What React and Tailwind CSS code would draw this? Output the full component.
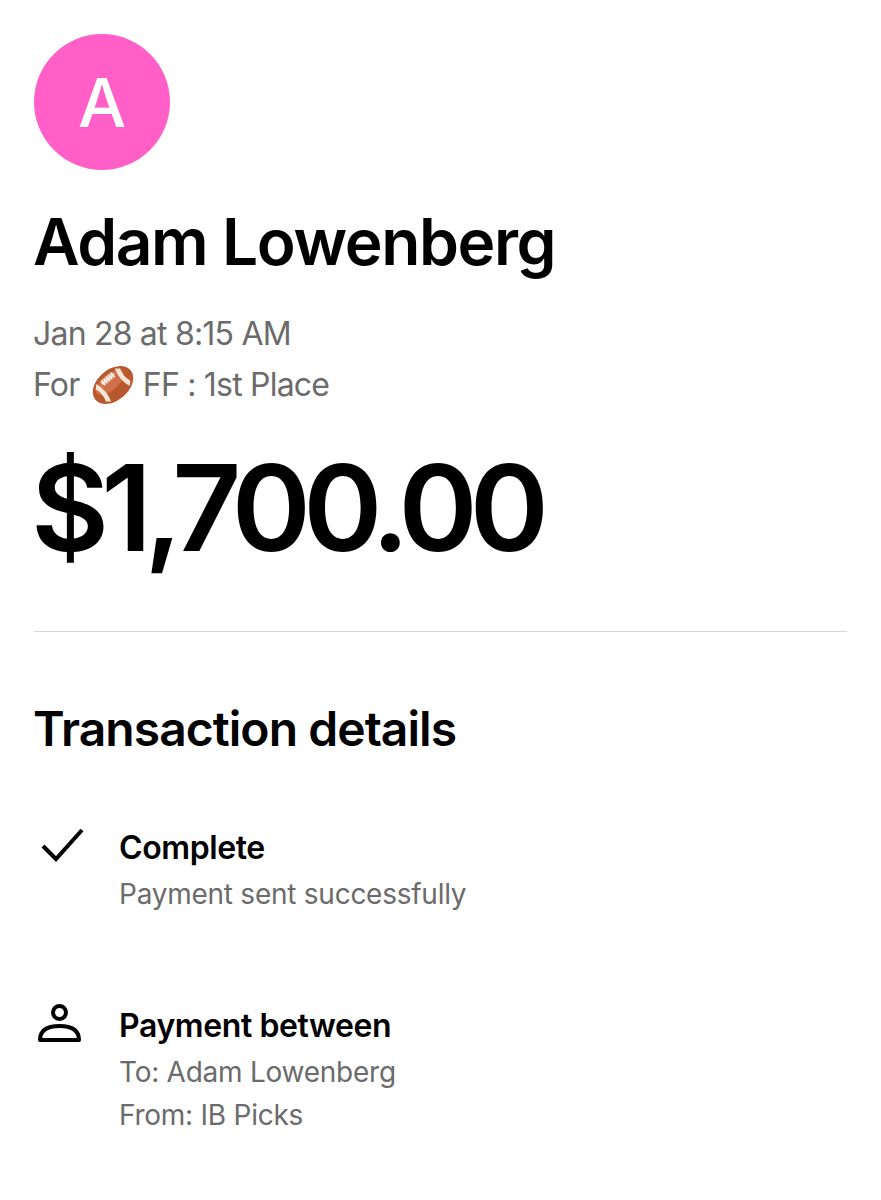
import React from "react";

const Football = () => (
  <svg width="44" height="44" viewBox="0 0 44 44" className="inline-block align-middle -mt-1 ml-[3px]">
    <g transform="rotate(-40 22 22)">
      <ellipse cx="22" cy="22" rx="23" ry="15.5" fill="#b9582f" />
      <ellipse cx="21" cy="18" rx="17" ry="8" fill="#d0704a" />
      <path d="M10 10.5 Q14 22 10 33.5 L6 30 Q9 22 6 14 Z" fill="#f3e6d6" />
      <path d="M34 10.5 Q30 22 34 33.5 L38 30 Q35 22 38 14 Z" fill="#f3e6d6" />
      <path d="M14 14 H30" stroke="#f5ece0" strokeWidth="2" />
      <path d="M16 11V17M19 11V17M22 11V17M25 11V17M28 11V17" stroke="#f5ece0" strokeWidth="2.2" />
    </g>
  </svg>
);

const DetailRow = ({ icon, title, lines, className }) => (
  <div className={`flex ${className}`}>
    <div className="w-[85px] shrink-0">{icon}</div>
    <div>
      <div className="text-[32px] leading-[44px] font-semibold text-black tracking-[-0.4px]">{title}</div>
      <div className="mt-[3px]">
        {lines.map((l) => (
          <div key={l} className="text-[28px] leading-[43px] text-[#6b6b6b] tracking-[-0.25px]">{l}</div>
        ))}
      </div>
    </div>
  </div>
);

export default function App() {
  return (
    <div className="w-[881px] h-[1200px] bg-white overflow-hidden px-[34px] pt-[34px] font-['Inter',sans-serif]">
      <div className="w-[136px] h-[136px] rounded-full bg-[#ff5fc6] flex items-center justify-center text-white text-[68px] font-[550]">
        A
      </div>
      <h1 className="mt-[32px] -ml-[1px] text-[64px] leading-[80px] font-semibold text-black tracking-[-1.4px]">Adam Lowenberg</h1>
      <div className="mt-[26px] -ml-[1px] text-[32px] leading-[51px] text-[#6b6b6b] tracking-[-0.8px]">
        <div>Jan 28 at 8:15 AM</div>
        <div>
          For <Football /> FF : 1st Place
        </div>
      </div>
      <div className="mt-[28px] -ml-[3px] text-[120px] leading-[140px] font-semibold text-black tracking-[-7.75px]">$1,700.00</div>
      <div className="mt-[53px] h-[1px] bg-[#d6d6d6]" />
      <h2 className="mt-[65px] -ml-[1px] text-[48px] leading-[64px] font-semibold text-black tracking-[-0.95px]">Transaction details</h2>
      <DetailRow
        className="mt-[65px]"
        title="Complete"
        lines={["Payment sent successfully"]}
        icon={
          <svg width="54" height="44" viewBox="0 0 54 44" fill="none" className="ml-[4px]">
            <path d="M5 20 L18 33 L44 4" stroke="#000" strokeWidth="4" />
          </svg>
        }
      />
      <DetailRow
        className="mt-[88px]"
        title="Payment between"
        lines={["To: Adam Lowenberg", "From: IB Picks"]}
        icon={
          <svg width="54" height="44" viewBox="0 0 54 44" fill="none" className="ml-[4px]">
            <circle cx="21.5" cy="8.5" r="6.5" stroke="#000" strokeWidth="4" />
            <path d="M2 36 Q2 22 21.5 22 Q41 22 41 36 Z" stroke="#000" strokeWidth="4" strokeLinejoin="round" />
          </svg>
        }
      />
    </div>
  );
}
